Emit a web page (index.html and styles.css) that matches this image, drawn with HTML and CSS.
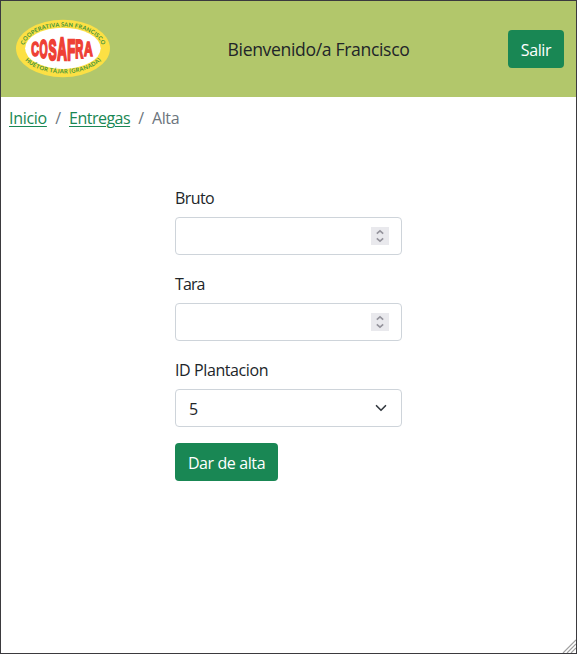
FILE: index.html
```
<!DOCTYPE html>
<html lang="es">
<head>
<meta charset="utf-8">
<title>Alta de entrega</title>
<link rel="stylesheet" href="styles.css">
</head>
<body>
<div class="frame">
  <header class="header">
    <svg class="logo" viewBox="0 0 96 60" role="img" aria-label="COSAFRA">
      <defs>
        <path id="arc-top" d="M8.5 30 A39.5 22.4 0 0 1 87.5 30"/>
        <path id="arc-bottom" d="M4.2 28.6 A43.8 25.8 0 0 0 91.8 28.6"/>
      </defs>
      <ellipse cx="48" cy="29.5" rx="47" ry="28.7" fill="#fce044"/>
      <ellipse cx="47.9" cy="29.3" rx="37.8" ry="20.6" fill="#fff"/>
      <text class="logo-ring"><textPath href="#arc-top" startOffset="50%" text-anchor="middle" textLength="91">COOPERATIVA SAN FRANCISCO</textPath></text>
      <text class="logo-ring"><textPath href="#arc-bottom" startOffset="50%" text-anchor="middle" textLength="82">HUÉTOR TÁJAR (GRANADA)</textPath></text>
      <g class="logo-name">
        <text transform="translate(16.3 37) scale(.57 1.08)">C</text>
        <text transform="translate(24.6 39.2) scale(.55 1.36)">O</text>
        <text transform="translate(33.4 40.6) scale(.64 1.55)">S</text>
        <text transform="translate(42.3 41.4) scale(.7 1.68)">A</text>
        <text transform="translate(52.2 40.8) scale(.68 1.6)">F</text>
        <text transform="translate(60.2 39.2) scale(.59 1.4)">R</text>
        <text transform="translate(69 36.9) scale(.64 1.1)">A</text>
      </g>
    </svg>
    <span class="welcome">Bienvenido/a Francisco</span>
    <button class="btn btn-exit" type="button">Salir</button>
  </header>
  <nav class="breadcrumb">
    <a class="crumb-home" href="#">Inicio</a><span class="slash">/</span><a class="crumb-list" href="#">Entregas</a><span class="slash">/</span><span class="current">Alta</span>
  </nav>
  <form class="form">
    <label class="label-bruto" for="bruto">Bruto</label>
    <div class="control">
      <input id="bruto" type="text" inputmode="numeric">
      <svg class="spin" viewBox="0 0 18 18"><path d="M5.8 6.6 9 3.8l3.2 2.8M5.8 11.4 9 14.2l3.2-2.8"/></svg>
    </div>
    <label class="label-tara" for="tara">Tara</label>
    <div class="control">
      <input id="tara" type="text" inputmode="numeric">
      <svg class="spin" viewBox="0 0 18 18"><path d="M5.8 6.6 9 3.8l3.2 2.8M5.8 11.4 9 14.2l3.2-2.8"/></svg>
    </div>
    <label class="label-id" for="plantacion">ID Plantacion</label>
    <div class="control">
      <select id="plantacion"><option>5</option></select>
      <svg class="chevron" viewBox="0 0 16 16"><path d="m2 5 6 6 6-6"/></svg>
    </div>
    <button class="btn btn-submit" type="button">Dar de alta</button>
  </form>
  <svg class="grip" viewBox="0 0 14 14"><path d="M1 14 14 1M5 14l9-9M9 14l5-5"/></svg>
</div>
</body>
</html>
```
FILE: styles.css
```
* { box-sizing: border-box; }
body {
  margin: 0;
  font: 16px/24px "Open Sans", "Noto Sans", sans-serif;
  color: #212529;
  background: #fff;
}
.frame {
  position: relative;
  height: 654px;
  border: 1px solid #3b3a3e;
  overflow: hidden;
}
.header {
  display: flex;
  align-items: center;
  justify-content: space-between;
  height: 96px;
  padding: 0 12px 0 14px;
  background: #b2c76b;
}
.logo { width: 96px; height: 60px; }
.logo-ring {
  font: 700 5.8px "Lato", sans-serif;
  fill: #43943b;
}
.logo-name {
  font: 700 19px "Liberation Sans", sans-serif;
  fill: #ee4035;
  stroke: #ee4035;
  stroke-width: 1.5;
}
.welcome {
  font-size: 17.6px;
  letter-spacing: -.35px;
  margin-left: 18px;
}
.btn {
  display: block;
  height: 38px;
  padding: 2px 0 0;
  border: 0;
  border-radius: 4px;
  background: #198754;
  color: #fff;
  font: inherit;
  white-space: nowrap;
}
.btn-exit { width: 56px; letter-spacing: -.4px; }
.btn-submit { width: 103px; letter-spacing: -.4px; }
.breadcrumb {
  display: flex;
  padding: 9px 8px 0;
  height: 82px;
  letter-spacing: -.3px;
}
.breadcrumb a { color: #198754; text-underline-offset: 2px; text-decoration-thickness: 1px; }
.crumb-home { width: 38px; }
.crumb-list { width: 61px; letter-spacing: -.5px; }
.slash { width: 22px; text-align: center; color: #6c757d; }
.current { color: #6c757d; letter-spacing: -.4px; }
.form { width: 227px; margin-left: 174px; padding-top: 7px; }
.form label { display: block; margin-bottom: 7px; }
.label-bruto { letter-spacing: -.6px; }
.label-tara { letter-spacing: -.9px; }
.label-id { letter-spacing: -.4px; }
.control { position: relative; height: 38px; margin-bottom: 17px; }
.control:has(select) { margin-bottom: 16px; }
.control input, .control select {
  display: block;
  width: 100%;
  height: 38px;
  padding: 2px 13px 0;
  border: 1px solid #ced4da;
  border-radius: 4px;
  background: #fff;
  color: inherit;
  font: inherit;
  appearance: none;
}
.spin {
  position: absolute;
  right: 13px;
  top: 10px;
  width: 18px;
  height: 18px;
  background: #e9e9ed;
  fill: none;
  stroke: #94939c;
  stroke-width: 1.6;
}
.chevron {
  position: absolute;
  right: 15px;
  top: 13px;
  width: 12px;
  height: 12px;
  fill: none;
  stroke: #343a40;
  stroke-width: 2.2;
  stroke-linecap: round;
  stroke-linejoin: round;
}
.grip {
  position: absolute;
  right: 0;
  bottom: 0;
  width: 14px;
  height: 14px;
  stroke: #a0a0a0;
  stroke-width: 1.2;
}
```
